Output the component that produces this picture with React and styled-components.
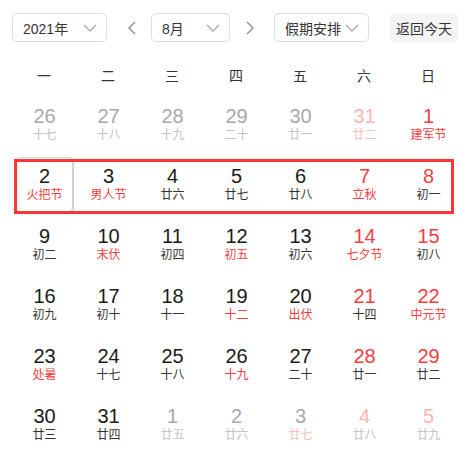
import React from "react"
import styled, { createGlobalStyle } from "styled-components"

const GlobalStyle = createGlobalStyle`
  html, body {
    margin: 0;
    padding: 0;
    background: #fff;
  }
  body {
    font-family: "Liberation Sans", "Noto Sans CJK SC", sans-serif;
    color: #333;
  }
`

const RED = "#f53f3f"

// t: 0 = current, 1 = other month ; w: weekend ; f: lunar text is red
const rows = [
  [
    { d: 26, l: "十七", o: 1 }, { d: 27, l: "十八", o: 1 }, { d: 28, l: "十九", o: 1 },
    { d: 29, l: "二十", o: 1 }, { d: 30, l: "廿一", o: 1 }, { d: 31, l: "廿二", o: 1, w: 1, f: 1 },
    { d: 1, l: "建军节", w: 1, f: 1 },
  ],
  [
    { d: 2, l: "火把节", f: 1, sel: 1 }, { d: 3, l: "男人节", f: 1 }, { d: 4, l: "廿六" },
    { d: 5, l: "廿七" }, { d: 6, l: "廿八" }, { d: 7, l: "立秋", w: 1, f: 1 },
    { d: 8, l: "初一", w: 1 },
  ],
  [
    { d: 9, l: "初二" }, { d: 10, l: "末伏", f: 1 }, { d: 11, l: "初四" },
    { d: 12, l: "初五", f: 1 }, { d: 13, l: "初六" }, { d: 14, l: "七夕节", w: 1, f: 1 },
    { d: 15, l: "初八", w: 1 },
  ],
  [
    { d: 16, l: "初九" }, { d: 17, l: "初十" }, { d: 18, l: "十一" },
    { d: 19, l: "十二", f: 1 }, { d: 20, l: "出伏", f: 1 }, { d: 21, l: "十四", w: 1 },
    { d: 22, l: "中元节", w: 1, f: 1 },
  ],
  [
    { d: 23, l: "处暑", f: 1 }, { d: 24, l: "十七" }, { d: 25, l: "十八" },
    { d: 26, l: "十九", f: 1 }, { d: 27, l: "二十" }, { d: 28, l: "廿一", w: 1 },
    { d: 29, l: "廿二", w: 1 },
  ],
  [
    { d: 30, l: "廿三" }, { d: 31, l: "廿四" }, { d: 1, l: "廿五", o: 1 },
    { d: 2, l: "廿六", o: 1 }, { d: 3, l: "廿七", o: 1, f: 1 }, { d: 4, l: "廿八", o: 1, w: 1 },
    { d: 5, l: "廿九", o: 1, w: 1 },
  ],
]

const weekdays = ["一", "二", "三", "四", "五", "六", "日"]

const Page = styled.div`
  padding: 13px 12px 0 12px;
  width: 448px;
`

const Toolbar = styled.div`
  display: flex;
  align-items: center;
  height: 29px;
`

const Select = styled.div`
  box-sizing: border-box;
  width: ${p => p.$w}px;
  height: 29px;
  border: 1px solid #dcdce2;
  border-radius: 5px;
  display: flex;
  align-items: center;
  justify-content: space-between;
  padding: 0 9px 0 10px;
  font-size: 14px;
  color: #333;
`

const ArrowBtn = styled.div`
  width: 16px;
  height: 29px;
  display: flex;
  align-items: center;
  justify-content: center;
  margin: ${p => (p.$next ? "0 17px 0 11px" : "0 11px 0 17px")};
`

const TodayBtn = styled.div`
  margin-left: 21px;
  height: 29px;
  padding: 0 6px;
  border-radius: 5px;
  background: #f4f4f5;
  display: flex;
  align-items: center;
  font-size: 14px;
  color: #333;
`

const Chevron = () => (
  <svg width="14" height="8" viewBox="0 0 14 8" fill="none">
    <path d="M1 1l6 6 6-6" stroke="#a8aab2" strokeWidth="1.3" />
  </svg>
)

const Arrow = ({ next }) => (
  <svg width="9" height="14" viewBox="0 0 9 14" fill="none">
    <path d={next ? "M2 1l6 6-6 6" : "M7 1L1 7l6 6"} stroke="#8c8d95" strokeWidth="1.4" />
  </svg>
)

const WeekHeader = styled.div`
  display: grid;
  grid-template-columns: repeat(7, 64px);
  margin-top: 14px;
  height: 38px;
  align-items: center;
`

const WeekDay = styled.div`
  text-align: center;
  font-size: 14px;
  color: #333;
`

const Body = styled.div`
  position: relative;
`

const Grid = styled.div`
  display: grid;
  grid-template-columns: repeat(7, 64px);
  grid-auto-rows: 60px;
`

const Cell = styled.div`
  box-sizing: border-box;
  margin: 3px 3px 2px 4px;
  display: flex;
  flex-direction: column;
  align-items: center;
  justify-content: center;
  border-radius: 4px;
  border: 1px solid ${p => (p.$sel ? "#d4d6db" : "transparent")};
  box-shadow: ${p => (p.$sel ? "1px 1px 1px rgba(0,0,0,0.22)" : "none")};
`

const numColor = p => {
  if (p.$o) return p.$w ? "#ffb3b3" : "#a8a8a8"
  return p.$w ? RED : "#1a1a1a"
}

const lunarColor = p => {
  if (p.$o) return p.$f ? "#ffbcbc" : "#c4c4c4"
  return p.$f ? RED : "#333"
}

const Num = styled.div`
  font-size: 20px;
  line-height: 20px;
  color: ${numColor};
`

const Lunar = styled.div`
  font-size: 12px;
  line-height: 18px;
  color: ${lunarColor};
`

const Highlight = styled.div`
  position: absolute;
  left: 2px;
  top: 65px;
  width: 440px;
  height: 55px;
  box-sizing: border-box;
  border: 3px solid #ff3434;
  pointer-events: none;
`

export default function App() {
  return (
    <>
      <GlobalStyle />
      <Page>
        <Toolbar>
          <Select $w={95}>
            <span>2021年</span>
            <Chevron />
          </Select>
          <ArrowBtn>
            <Arrow />
          </ArrowBtn>
          <Select $w={79}>
            <span>8月</span>
            <Chevron />
          </Select>
          <ArrowBtn $next>
            <Arrow next />
          </ArrowBtn>
          <Select $w={95}>
            <span>假期安排</span>
            <Chevron />
          </Select>
          <TodayBtn>返回今天</TodayBtn>
        </Toolbar>
        <WeekHeader>
          {weekdays.map(w => (
            <WeekDay key={w}>{w}</WeekDay>
          ))}
        </WeekHeader>
        <Body>
          <Grid>
            {rows.flat().map((c, i) => (
              <Cell key={i} $sel={c.sel}>
                <Num $o={c.o} $w={c.w}>{c.d}</Num>
                <Lunar $o={c.o} $f={c.f}>{c.l}</Lunar>
              </Cell>
            ))}
          </Grid>
          <Highlight />
        </Body>
      </Page>
    </>
  )
}
